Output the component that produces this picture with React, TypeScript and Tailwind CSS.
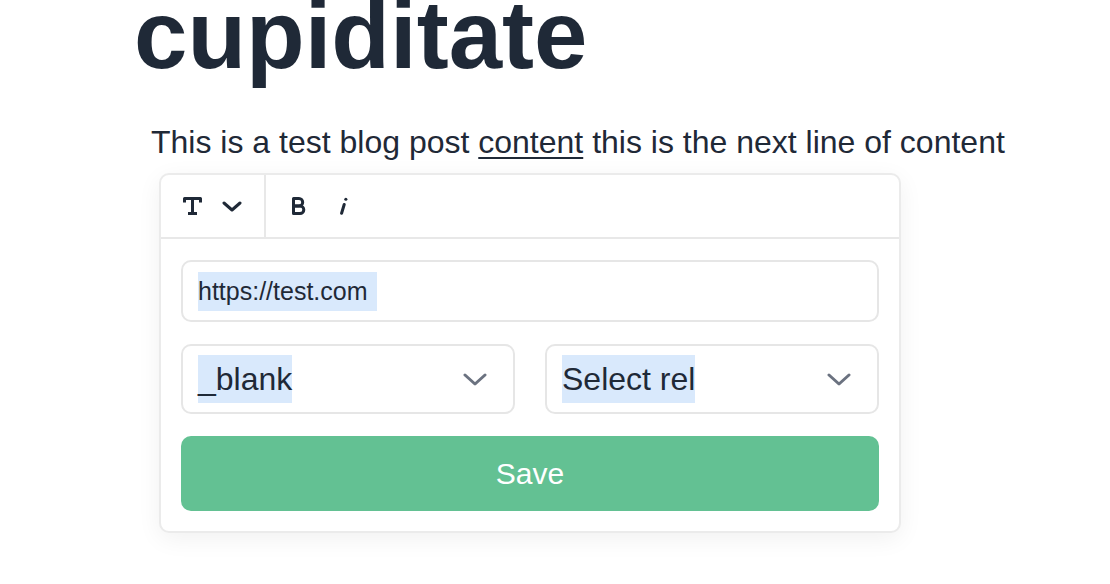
import React from 'react';

const font = { fontFamily: '"Liberation Sans", Arial, sans-serif' };

const TextIcon = () => (
    <svg width="19" height="18" viewBox="0 0 19 18" fill="none" stroke="#1f2937" strokeWidth="3" strokeLinejoin="round">
        <path d="M1.5 5.5V1.5h16v4" />
        <path d="M9.5 1.5v15" />
        <path d="M5 16.5h9" />
    </svg>
);

const ChevronDown = ({ className, color, w = 20, h = 11, sw = 3 }: { className?: string; color: string; w?: number; h?: number; sw?: number }) => (
    <svg className={className} width={w} height={h} viewBox={`0 0 ${w} ${h}`} fill="none" stroke={color} strokeWidth={sw} strokeLinecap="round" strokeLinejoin="round">
        <path d={`M${sw / 2 + 0.5} ${sw / 2 + 0.5}L${w / 2} ${h - sw / 2 - 0.5}L${w - sw / 2 - 0.5} ${sw / 2 + 0.5}`} />
    </svg>
);

const BoldIcon = () => (
    <svg width="15" height="18" viewBox="0 0 15 18" fill="none" stroke="#1f2937" strokeWidth="3" strokeLinejoin="round">
        <path d="M1.5 1.5h5.5a3.6 3.6 0 0 1 0 7.4H1.5z" />
        <path d="M1.5 8.9h6.5a3.8 3.8 0 0 1 0 7.6H1.5z" />
    </svg>
);

const ItalicIcon = () => (
    <svg width="9" height="18" viewBox="0 0 9 18" fill="none" stroke="#1f2937" strokeWidth="3" strokeLinecap="round">
        <path d="M5.2 7.5L2.6 16.2" />
        <path d="M6.8 2.2L6.9 2.2" />
    </svg>
);

const SelectBox = ({ label }: { label: string }) => (
    <div className="flex-1 h-[70px] border-2 border-[#e6e6e6] rounded-[10px] bg-white flex items-center justify-between pl-[15px] pr-[26px]">
        <span className="text-[32px] leading-[48px] bg-[#d9e9fc] text-[#1f2937]">{label}</span>
        <ChevronDown color="#6b7280" w={24} h={13} sw={3} />
    </div>
);

export default function App() {
    return (
        <div className="w-full h-[584px] bg-white overflow-hidden" style={font}>
            <div className="flex flex-col items-start pl-[134px]">
                <h1 className="text-[96px] leading-none font-bold text-[#1f2937] mt-[-13px]">cupiditate</h1>

                <p className="ml-[17px] mt-[41px] text-[32px] leading-[36px] text-[#1f2937] whitespace-nowrap">
                    This is a test blog post{' '}
                    <span className="underline decoration-2 underline-offset-[4px]">content</span>{' '}
                    this is the next line of content
                </p>

                {/* Link popover */}
                <div className="ml-[25px] mt-[13px] w-[742px] border-2 border-[#ebebeb] rounded-[10px] bg-white shadow-[0_6px_24px_rgba(0,0,0,0.06)]">
                    <div className="flex h-[64px] border-b-2 border-[#e8e8e8]">
                        <div className="w-[105px] flex items-center gap-[20px] pl-[22px] border-r-2 border-[#e8e8e8]">
                            <TextIcon />
                            <ChevronDown color="#1f2937" w={20} h={11} sw={3} />
                        </div>
                        <div className="flex items-center gap-[32px] pl-[26px]">
                            <BoldIcon />
                            <ItalicIcon />
                        </div>
                    </div>

                    <div className="flex flex-col gap-[22px] px-[20px] pt-[21px] pb-[20px]">
                        <div className="h-[62px] border-2 border-[#e6e6e6] rounded-[10px] flex items-center pl-[15px]">
                            <span className="text-[25px] leading-[39px] bg-[#d9e9fc] text-[#1f2937] pr-[9px]">https://test.com</span>
                        </div>

                        <div className="flex gap-[30px]">
                            <SelectBox label="_blank" />
                            <SelectBox label="Select rel" />
                        </div>

                        <button className="h-[75px] w-full rounded-[10px] bg-[#63c193] text-white text-[30px]">
                            Save
                        </button>
                    </div>
                </div>
            </div>
        </div>
    );
}
